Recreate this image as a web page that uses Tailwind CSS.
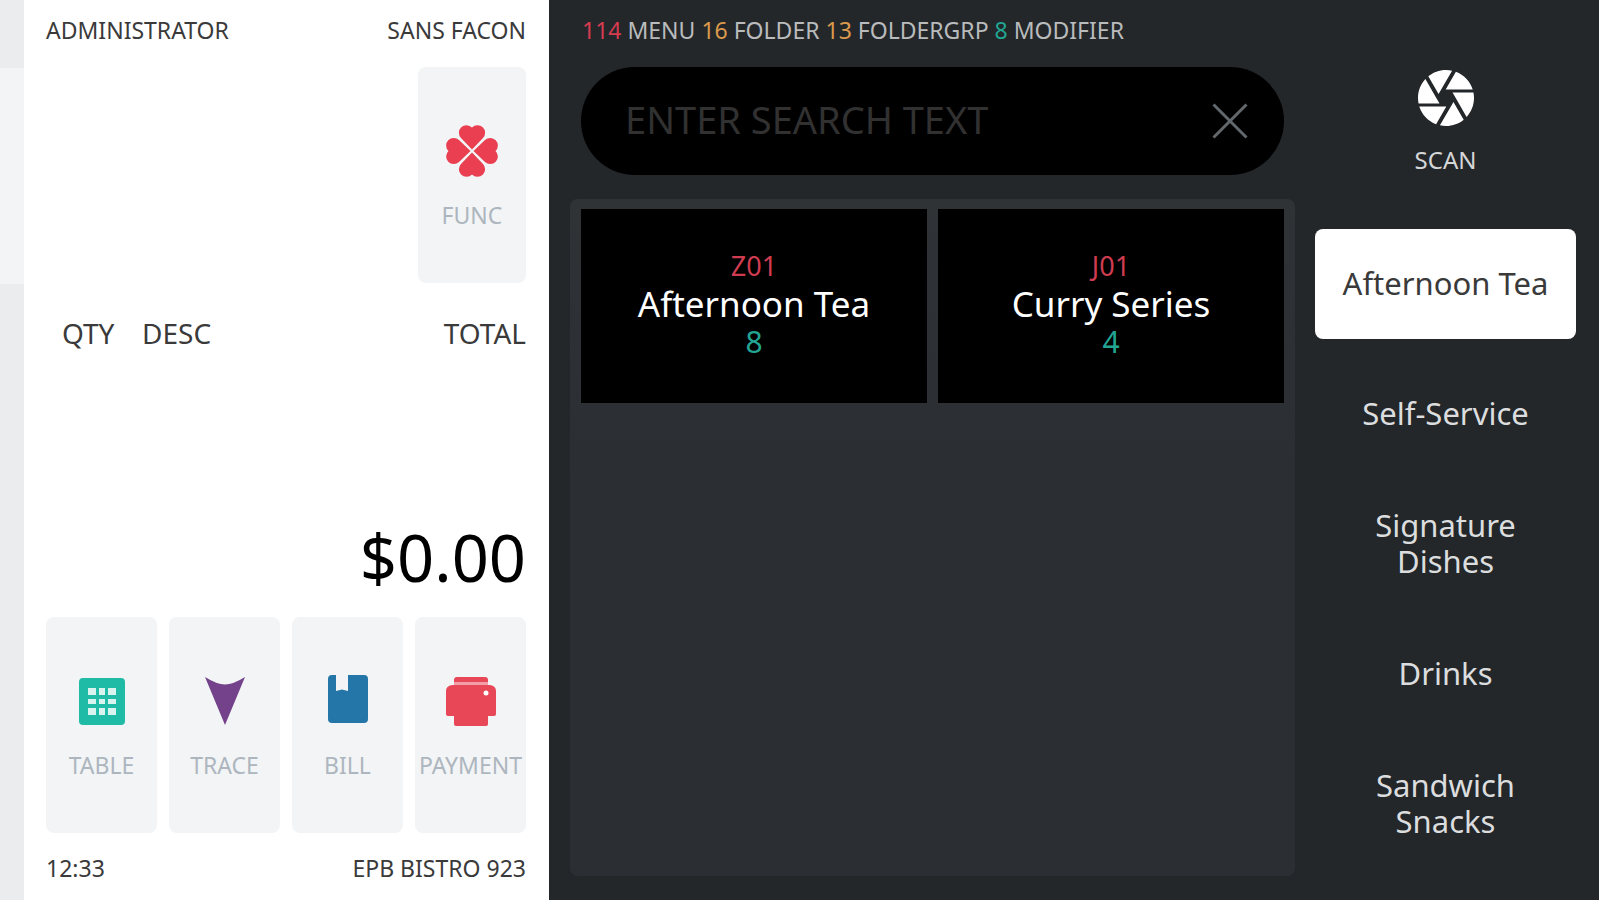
<!DOCTYPE html>
<html lang="en">
<head>
<meta charset="utf-8">
<meta name="viewport" content="width=device-width, initial-scale=1">
<title>EPB Bistro POS</title>
<script src="https://cdn.jsdelivr.net/npm/@tailwindcss/browser@4"></script>
</head>
<body class="flex min-h-screen bg-[#23272a] font-['Noto_Sans','Open_Sans',sans-serif]">

  <!-- Edge of the underlying screen -->
  <div class="flex w-6 shrink-0 flex-col bg-[#ebecee]">
    <div class="mt-17 h-54 bg-[#f2f4f6]"></div>
  </div>

  <!-- Order panel -->
  <section class="flex w-[525px] shrink-0 flex-col bg-white pt-4 pr-[23px] pb-[18px] pl-[22px] text-[#3a3a3a]">
    <header class="flex justify-between text-[23px] leading-7">
      <span>ADMINISTRATOR</span>
      <span>SANS FACON</span>
    </header>

    <button class="mt-[23px] flex h-54 w-[108px] flex-col items-center self-end rounded-lg bg-[#f2f4f6] pt-[58px] text-[23px] leading-7 text-[#adb6be]">
      <svg class="size-[52px]" viewBox="0 0 52 52" fill="#e93f50" aria-hidden="true">
        <path d="M26 24.5 15 13A7 7 0 0 1 26 2.5A7 7 0 0 1 37 13Z"/>
        <path d="M26 24.5 15 13A7 7 0 0 1 26 2.5A7 7 0 0 1 37 13Z" transform="rotate(90 26 26)"/>
        <path d="M26 24.5 15 13A7 7 0 0 1 26 2.5A7 7 0 0 1 37 13Z" transform="rotate(180 26 26)"/>
        <path d="M26 24.5 15 13A7 7 0 0 1 26 2.5A7 7 0 0 1 37 13Z" transform="rotate(270 26 26)"/>
      </svg>
      <span class="mt-6">FUNC</span>
    </button>

    <table class="mt-8 w-full text-[28px] leading-9">
      <thead>
        <tr>
          <th scope="col" class="w-24 pl-4 text-left font-normal">QTY</th>
          <th scope="col" class="text-left font-normal">DESC</th>
          <th scope="col" class="text-right font-normal">TOTAL</th>
        </tr>
      </thead>
    </table>

    <p class="mt-auto text-right text-[65px] leading-16 text-black">$0.00</p>

    <div class="mt-7 grid grid-cols-4 gap-3 text-[23px] leading-7 text-[#adb6be]">
      <button class="flex h-54 flex-col items-center rounded-lg bg-[#f2f4f6] pt-[58px]">
        <svg class="size-[52px]" viewBox="0 0 52 52" aria-hidden="true">
          <rect x="3" y="3" width="46" height="47" rx="4" fill="#1fbba6"/>
          <g fill="#d9f4ef">
            <rect x="12" y="13" width="8" height="7"/><rect x="23" y="13" width="6" height="7"/><rect x="32" y="13" width="8" height="7"/>
            <rect x="12" y="24" width="8" height="5"/><rect x="23" y="24" width="6" height="5"/><rect x="32" y="24" width="8" height="5"/>
            <rect x="12" y="33" width="8" height="7"/><rect x="23" y="33" width="6" height="7"/><rect x="32" y="33" width="8" height="7"/>
          </g>
        </svg>
        <span class="mt-6">TABLE</span>
      </button>
      <button class="flex h-54 flex-col items-center rounded-lg bg-[#f2f4f6] pt-[58px]">
        <svg class="size-[52px]" viewBox="0 0 52 52" aria-hidden="true">
          <path d="M6 2Q18 9.500 26 9.500T46 2L26 50Z" fill="#74428a"/>
        </svg>
        <span class="mt-6">TRACE</span>
      </button>
      <button class="flex h-54 flex-col items-center rounded-lg bg-[#f2f4f6] pt-[58px]">
        <svg class="size-[52px]" viewBox="0 0 52 52" aria-hidden="true">
          <path d="M10 0H14V16L20 14.500L26 16V0H42A4 4 0 0 1 46 4V44A4 4 0 0 1 42 48H10A4 4 0 0 1 6 44V4A4 4 0 0 1 10 0Z" fill="#2475a8"/>
        </svg>
        <span class="mt-6">BILL</span>
      </button>
      <button class="flex h-54 flex-col items-center rounded-lg bg-[#f2f4f6] pt-[58px]">
        <svg class="size-[52px]" viewBox="0 0 52 52" aria-hidden="true">
          <path d="M12 2H40A3 3 0 0 1 43 5V8H9V5A3 3 0 0 1 12 2Z" fill="#e84757"/>
          <rect x="9" y="7" width="34" height="3" fill="#f39ea6"/>
          <path d="M7 10H45Q51 11 51 16V39Q51 41 49 41H43V49Q43 51 41 51H11Q9 51 9 49V41H3Q1 41 1 39V16Q1 11 7 10Z" fill="#e84757"/>
          <circle cx="41" cy="18" r="2.500" fill="#fff"/>
        </svg>
        <span class="mt-6">PAYMENT</span>
      </button>
    </div>

    <footer class="mt-[21px] flex justify-between text-[23px] leading-7">
      <time>12:33</time>
      <span>EPB BISTRO 923</span>
    </footer>
  </section>

  <!-- Menu browser -->
  <main class="flex min-w-0 flex-1 flex-col pt-4 pr-5 pb-6 pl-[21px]">
    <p class="px-3 text-[23px] leading-7 text-[#b9bbbc]"><span class="text-[#d63b50]">114</span> MENU <span class="text-[#dc9a4c]">16</span> FOLDER <span class="text-[#dc9a4c]">13</span> FOLDERGRP <span class="text-[#22a693]">8</span> MODIFIER</p>

    <form class="mx-[11px] mt-[23px] flex h-[108px] shrink-0 items-center rounded-full bg-black pr-9 pl-11">
      <input type="text" aria-label="Search text" placeholder="ENTER SEARCH TEXT" class="min-w-0 flex-1 bg-transparent pb-1 text-[38px] text-white outline-none placeholder:text-[#313131]">
      <button type="reset" aria-label="Clear search">
        <svg class="size-9" viewBox="0 0 36 36" fill="none" stroke="#62686b" stroke-width="3" aria-hidden="true"><path d="M1.500 1.500 34.500 34.500M34.500 1.500 1.500 34.500"/></svg>
      </button>
    </form>

    <div class="mt-6 flex-1 rounded-lg bg-linear-to-b from-[#2f3336] to-[#2b2e33] to-40% px-[11px] pt-[10px]">
      <div class="grid grid-cols-2 gap-[11px]">
        <button class="flex h-[194px] flex-col items-center justify-center bg-black pb-1 text-white">
          <span class="text-[27px] leading-9 text-[#cf3c50]">Z01</span>
          <span class="text-[35px] leading-10">Afternoon Tea</span>
          <span class="text-[30px] leading-9 text-[#22a693]">8</span>
        </button>
        <button class="flex h-[194px] flex-col items-center justify-center bg-black pb-1 text-white">
          <span class="text-[27px] leading-9 text-[#cf3c50]">J01</span>
          <span class="text-[35px] leading-10">Curry Series</span>
          <span class="text-[30px] leading-9 text-[#22a693]">4</span>
        </button>
      </div>
    </div>
  </main>

  <!-- Folder navigation -->
  <aside class="flex w-[284px] shrink-0 flex-col pr-[23px] pt-[70px]">
    <button class="flex flex-col items-center text-[24px] leading-7 text-[#d5d6d7]">
      <svg class="size-14" viewBox="2 2 20 20" fill="#fff" aria-hidden="true"><path d="M9.400 10.500l4.770-8.260C13.470 2.090 12.750 2 12 2c-2.400 0-4.600.85-6.320 2.250l3.660 6.350.06-.1zM21.540 9c-.92-2.920-3.150-5.260-6-6.340L11.880 9h9.660zm.26 1h-7.490l.29.500 4.760 8.250C21 16.970 22 14.610 22 12c0-.69-.07-1.350-.2-2zM8.540 12l-3.900-6.750C3.010 7.030 2 9.390 2 12c0 .69.070 1.350.2 2h7.490l-1.150-2zm-6.080 3c.92 2.920 3.150 5.260 6 6.340L12.120 15H2.460zm11.270 0l-3.900 6.760c.7.150 1.420.24 2.170.24 2.400 0 4.600-.85 6.320-2.250l-3.660-6.350-.93 1.600z"/></svg>
      <span class="mt-5">SCAN</span>
    </button>
    <nav class="mt-[55px] flex flex-col gap-5 text-[31px] leading-9 text-[#dcddde]" aria-label="Folders">
      <button class="h-[110px] rounded-lg bg-white px-6 pb-0.5 text-[#3a3a3a]">Afternoon Tea</button>
      <button class="h-[110px] rounded-lg px-6 pb-0.5">Self-Service</button>
      <button class="h-[110px] rounded-lg px-12 pb-0.5">Signature Dishes</button>
      <button class="h-[110px] rounded-lg px-12 pb-0.5">Drinks</button>
      <button class="h-[110px] rounded-lg px-12 pb-0.5">Sandwich Snacks</button>
    </nav>
  </aside>

</body>
</html>
